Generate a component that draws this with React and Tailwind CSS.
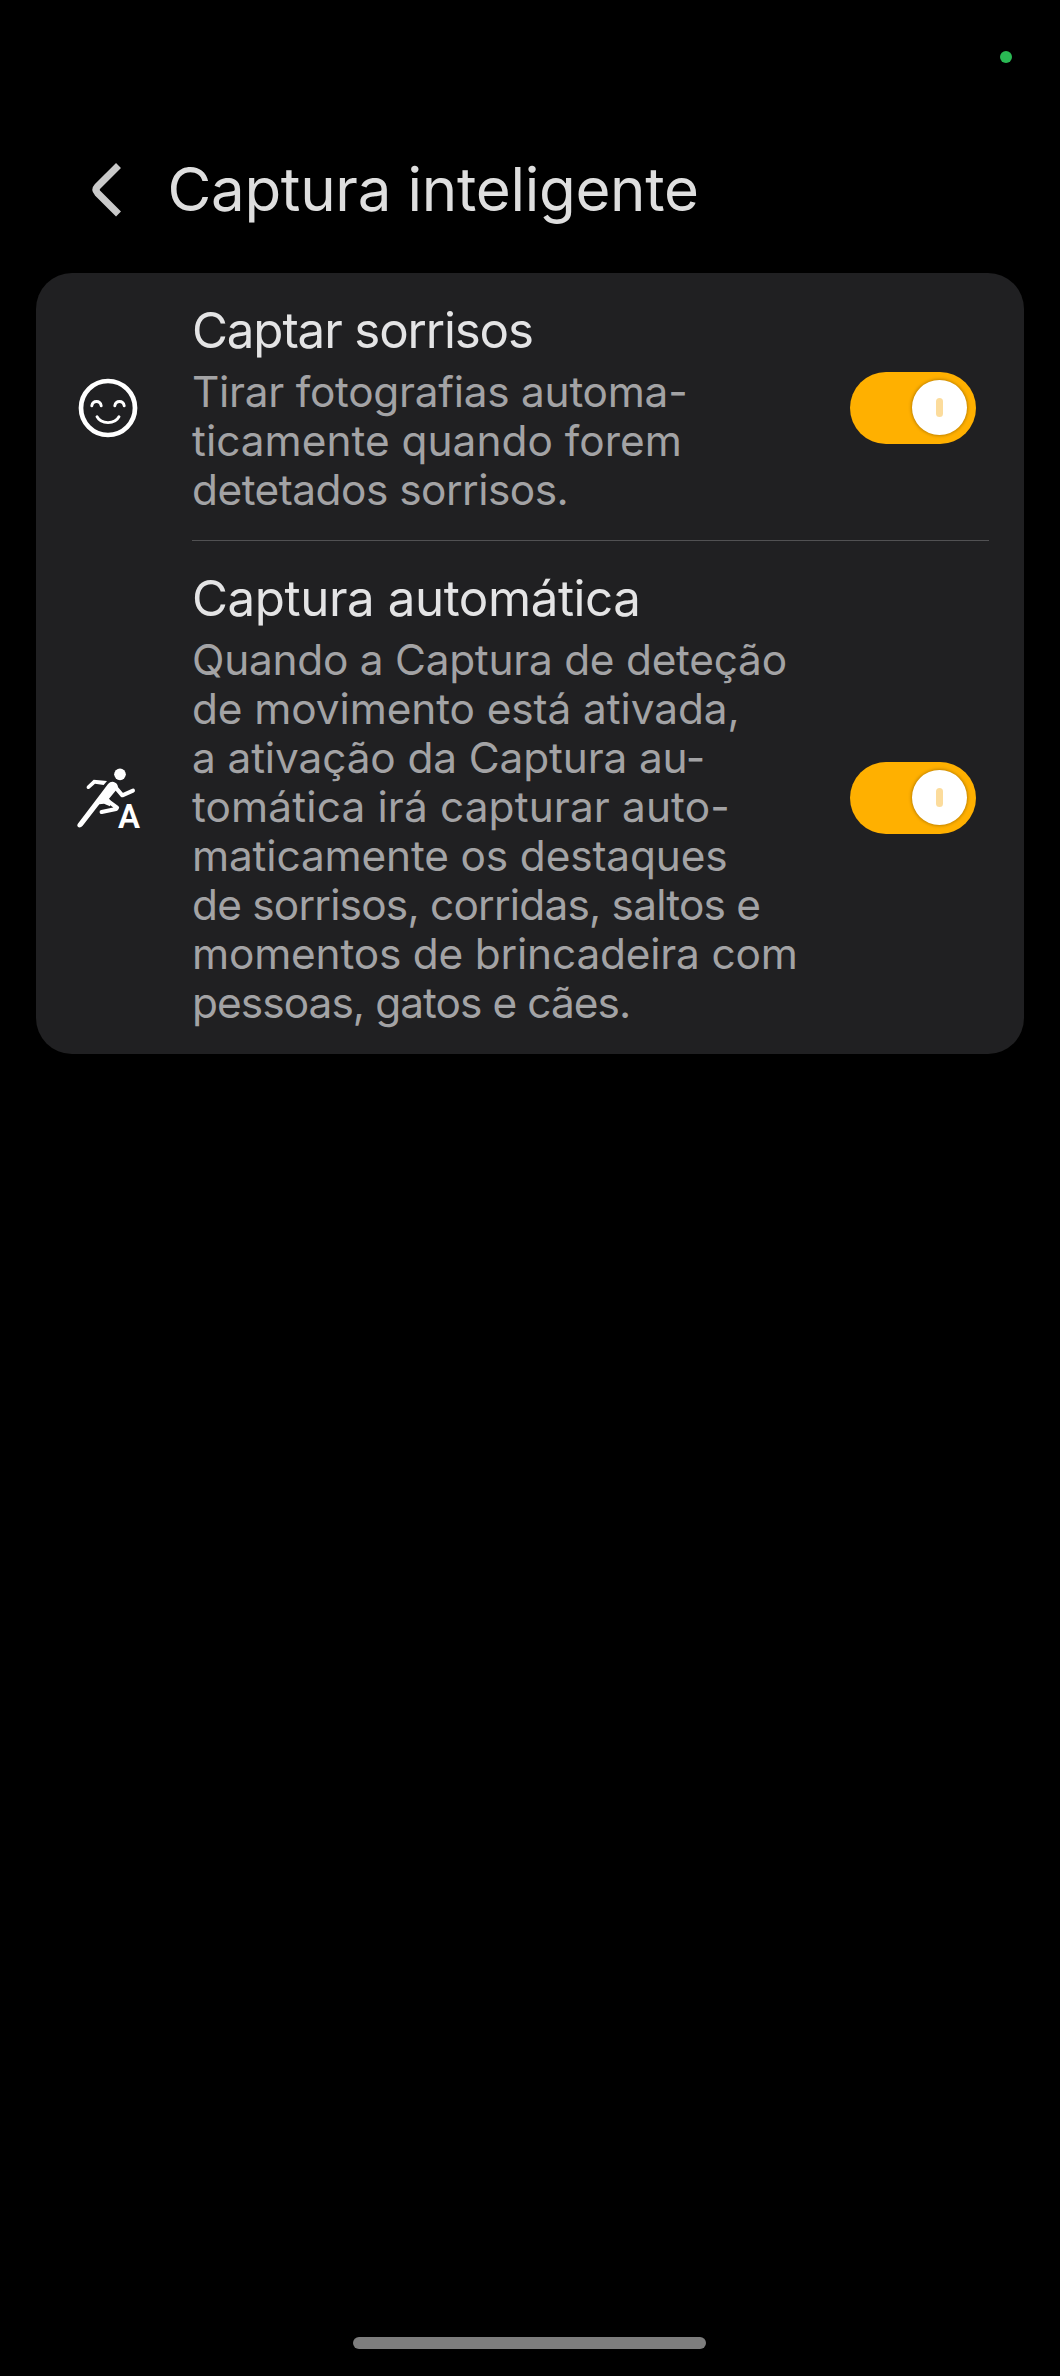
import { useState } from "react";

function SmileIcon() {
  return (
    <svg
      width="60"
      height="60"
      viewBox="0 0 60 60"
      fill="none"
      stroke="white"
      strokeLinecap="round"
    >
      <circle cx="30" cy="30" r="27" strokeWidth="4.7" />
      <path
        d="M13.8 27.8C14.8 22 22.2 22 23.2 27.8M36.8 27.8C37.8 22 45.2 22 46.2 27.8M19 38.7C23 46.6 37 46.6 41 38.7"
        strokeWidth="2.9"
      />
    </svg>
  );
}

function RunnerIcon() {
  return (
    <svg
      width="72"
      height="66"
      viewBox="36 42 216 198"
      fill="white"
      className="overflow-visible"
    >
      <circle cx="180" cy="70" r="17.5" />
      {/* arms and front leg */}
      <path d="M101 86L141 90L131 102L105 98L88 113Q82 116 80 111Q79 107 82 104Z" />
      <g fill="none" stroke="white" strokeLinecap="round" strokeLinejoin="round">
        <path d="M164 106L187 133L219 119" strokeWidth="12" />
        <path d="M138 146L171 170L168 174L125 183" strokeWidth="12.5" />
      </g>
      <path d="M53 219L122 128L144 99Q154 88 166 95Q176 101 173 112L147 143L152 150L150 166L132 158L118 160L68 224Q61 232 54 228Q50 224 53 219Z" />
      <text
        x="174"
        y="231"
        className="font-['Roboto',sans-serif] text-[99px] font-semibold"
      >
        A
      </text>
    </svg>
  );
}

function Toggle({ label }) {
  const [on, setOn] = useState(true);

  return (
    <button
      role="switch"
      aria-checked={on}
      aria-label={label}
      onClick={() => setOn(!on)}
      className={`flex h-[72px] w-[126px] shrink-0 items-center rounded-full pr-[9px] pb-px pl-[8px] ${
        on ? "justify-end bg-[#ffb000]" : "justify-start bg-[#4a4a4c]"
      }`}
    >
      <span className="flex size-[55px] items-center justify-center rounded-full bg-white shadow-[0_0_3px_1px_rgba(120,80,0,0.45)]">
        <span className="h-[19px] w-[7px] rounded-full bg-[#fcdc9c]" />
      </span>
    </button>
  );
}

const settings = [
  {
    title: "Captar sorrisos",
    titleClass: "tracking-[-1.13px]",
    icon: <SmileIcon />,
    lines: [
      ["Tirar fotografias automa-", "tracking-[-0.25px]"],
      ["ticamente quando forem", "tracking-[0.02px]"],
      ["detetados sorrisos.", "tracking-[-0.5px]"],
    ],
  },
  {
    title: "Captura automática",
    titleClass: "tracking-[-0.42px]",
    icon: <RunnerIcon />,
    lines: [
      ["Quando a Captura de deteção", "tracking-[-0.25px]"],
      ["de movimento está ativada,", "tracking-[-0.09px]"],
      ["a ativação da Captura au-", "tracking-[-0.12px]"],
      ["tomática irá capturar auto-", "tracking-[0.14px]"],
      ["maticamente os destaques", "tracking-[-0.14px]"],
      ["de sorrisos, corridas, saltos e", "tracking-[-0.77px]"],
      ["momentos de brincadeira com", "tracking-[-0.18px]"],
      ["pessoas, gatos e cães.", "tracking-[-0.92px]"],
    ],
  },
];

function App() {
  return (
    <div className="flex h-[2376px] w-[1060px] flex-col bg-black font-['Inter',sans-serif]">
      <div className="flex h-[153px] justify-end pt-[51px] pr-12">
        <span className="size-3 rounded-full bg-[#2ab954]" />
      </div>

      <header className="flex h-[72px] items-center pl-[88px]">
        <button aria-label="Voltar">
          <svg width="36" height="60" viewBox="0 0 36 60" fill="none">
            <path
              d="M30.5 6.5L9.5 27.5Q6.5 30.7 9.5 34L30.5 55"
              stroke="#c9c9c9"
              strokeWidth="7"
            />
          </svg>
        </button>
        <h1 className="ml-[43.5px] text-[60px] leading-[72px] tracking-[-0.3px] whitespace-nowrap text-[#dedede]">
          Captura inteligente
        </h1>
      </header>

      <main className="mx-9 mt-12 rounded-[36px] bg-[#202022] pb-px">
        {settings.map((item, i) => (
          <div key={item.title}>
            {i > 0 && <div className="mr-[35px] ml-[156px] h-px bg-[#515153]" />}
            <section className="flex items-center pt-7 pr-12 pb-[26px]">
              <div className="flex w-36 shrink-0 justify-center">{item.icon}</div>
              <div className="ml-3 flex-1 whitespace-nowrap">
                <h2
                  className={`text-[49.25px] leading-[58px] text-[#e4e4e5] ${item.titleClass}`}
                >
                  {item.title}
                </h2>
                <div className="mt-2 text-[42.36px] leading-[49px] text-[#a3a3a5]">
                  {item.lines.map(([text, tracking]) => (
                    <p key={text} className={tracking}>
                      {text}
                    </p>
                  ))}
                </div>
              </div>
              <Toggle label={item.title} />
            </section>
          </div>
        ))}
      </main>

      <div className="mt-auto mb-[27px] ml-[353px] h-3 w-[353px] rounded-full bg-[#7d7d7d]" />
    </div>
  );
}

export default App;
